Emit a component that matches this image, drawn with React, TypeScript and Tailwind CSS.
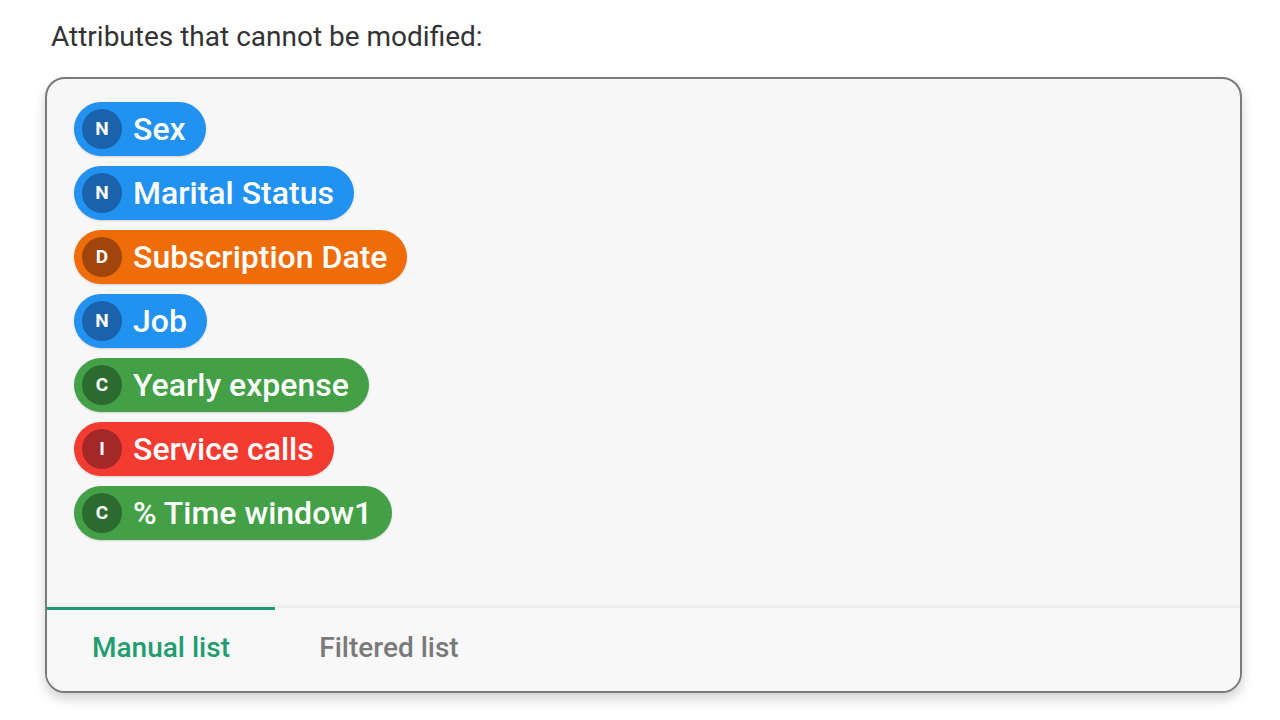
import React from "react";

type Chip = { letter: string; label: string; bg: string; dot: string };

const chips: Chip[] = [
  { letter: "N", label: "Sex", bg: "bg-[#2192f0]", dot: "bg-[#1a63ac]" },
  { letter: "N", label: "Marital Status", bg: "bg-[#2192f0]", dot: "bg-[#1a63ac]" },
  { letter: "D", label: "Subscription Date", bg: "bg-[#ef6c0a]", dot: "bg-[#a0450c]" },
  { letter: "N", label: "Job", bg: "bg-[#2192f0]", dot: "bg-[#1a63ac]" },
  { letter: "C", label: "Yearly expense", bg: "bg-[#43a046]", dot: "bg-[#2c6b2f]" },
  { letter: "I", label: "Service calls", bg: "bg-[#f33b32]", dot: "bg-[#a52828]" },
  { letter: "C", label: "% Time window1", bg: "bg-[#43a046]", dot: "bg-[#2c6b2f]" },
];

export default function App() {
  return (
    <div
      className="w-[1280px] h-[720px] bg-white overflow-hidden"
      style={{ fontFamily: "Roboto, 'Liberation Sans', sans-serif" }}
    >
      <div className="pl-[51px] pt-[20px] text-[28px] leading-[34px] text-[#333333]">
        Attributes that cannot be modified:
      </div>
      <div className="ml-[45px] mt-[23px] w-[1197px] h-[616px] border-2 border-[#7b7b7b] rounded-[20px] bg-[#f7f7f7] shadow-[0_6px_12px_rgba(0,0,0,0.18)] flex flex-col overflow-hidden">
        <div className="flex-1 pl-[27px] pt-[23px] flex flex-col items-start gap-[10px]">
          {chips.map((c, i) => (
            <div
              key={i}
              className={`${c.bg} h-[54px] rounded-full flex items-center pl-[8px] pr-[20px] shadow-[0_1px_2px_rgba(0,0,0,0.15)]`}
            >
              <div
                className={`${c.dot} w-[40px] h-[40px] rounded-full flex items-center justify-center text-white text-[19px] font-bold`}
              >
                {c.letter}
              </div>
              <span className="ml-[11px] text-white text-[32px] font-medium leading-none">
                {c.label}
              </span>
            </div>
          ))}
        </div>
        <div className="h-[84px] flex bg-[#f8f8f8] border-t border-[#ececec] shadow-[0_-2px_4px_rgba(0,0,0,0.04)]">
          <div className="w-[228px] h-full border-t-[3px] border-[#1f9a6e] -mt-px flex items-center justify-center pb-[4px] text-[28px] font-medium text-[#239c70]">
            Manual list
          </div>
          <div className="w-[228px] h-full flex items-center justify-center pb-[4px] text-[28px] font-medium text-[#7a7a7a]">
            Filtered list
          </div>
        </div>
      </div>
    </div>
  );
}
